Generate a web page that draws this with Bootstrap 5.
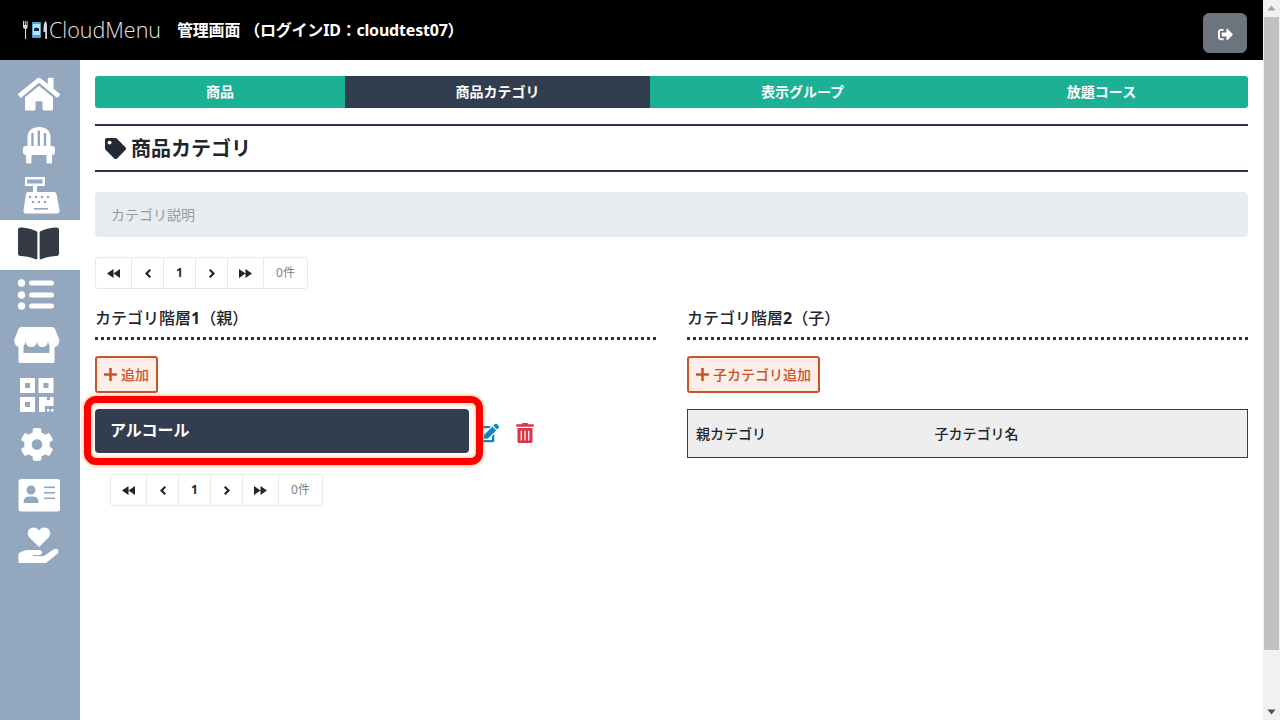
<!DOCTYPE html>
<html lang="ja">
<head>
<meta charset="utf-8">
<title>CloudMenu</title>
<link href="https://cdn.jsdelivr.net/npm/bootstrap@5.3.0/dist/css/bootstrap.min.css" rel="stylesheet">
<style>
html,body{height:720px;overflow:hidden}
body{font-family:"Noto Sans","Noto Sans CJK JP",sans-serif;color:#212529;background:#fff;font-size:14px}
.app-shell{height:720px;width:1280px}
.app-main{width:1263px}
.top-bar{height:60px;background:#000;padding:0 16px 0 23px;flex:none}
.logo-mark{width:24px;height:18px;margin-right:2px;flex:none}
.logo-word{font-family:"Open Sans","Noto Sans",sans-serif;font-weight:300;font-size:21.5px;color:#e4e4e4;width:128px;line-height:1}
.top-title{font-weight:700;font-size:16px;color:#fff;letter-spacing:-.2px}
.logout-btn{width:44px;height:40px;padding:0;background:#6c757d;border-color:#6c757d;margin-top:5px}
.logout-btn svg{width:17px;height:15px;fill:#fff}
.side-rail{width:80px;background:#93a8bf;padding-top:10px;flex:none}
.rail-item{height:50px;display:block}
.rail-item>svg{display:block;width:80px;height:50px}
.rail-on{background:#fff}
.page-body{padding:16px 15px 0;min-width:0}
.tab-strip{height:32px;background:#1cb094;border-radius:3px;overflow:hidden;flex-wrap:nowrap}
.tab-strip .nav-link{padding:0;color:#fff;font-weight:700;font-size:14px;line-height:32px;text-align:center;border-radius:0}
.tab-a{width:250px}.tab-b,.tab-c{width:305px}.tab-d{width:293px}
.tab-strip .nav-link.active{background:#333d50;color:#fff}
.head-band{margin-top:16px;height:48px;border-top:2px solid #2a3447;border-bottom:2px solid #2a3447;padding-left:10px;gap:5px}
.head-band svg{width:21px;height:21px;fill:#212b36;flex:none}
.head-band h1{font-size:20px;font-weight:700;margin:2px 0 0}
.desc-box{margin-top:20px;height:45px;background:#e9ecef;border-radius:4px;padding-left:16px;color:#969a9f;font-size:14px;line-height:45px}
.pager{margin:0;height:32px;--bs-pagination-border-radius:3px}
.pager .page-link{height:32px;padding:0;display:flex;align-items:center;justify-content:center;color:#212529;border-color:#e7e9eb;font-weight:700;background:#fff;font-size:12px}
.pager .page-link svg{fill:#212529}
.pg-w1{width:37px}.pg-w2{width:32px}.pg-w3{width:36px}.pg-w4{width:44px}
.pager .pg-w1 .page-link,.pager .pg-w2 .page-link,.pager .pg-w3 .page-link,.pager .pg-w4 .page-link{margin-left:-1px;width:calc(100% + 1px)}
.pager .pg-w1:first-child .page-link{margin-left:0;width:100%}
.pager .pg-w4 .page-link{color:#7b8085;font-weight:400}
.top-pager{margin-top:20px}
.cols{margin-top:18px;gap:31px}
.col-half{width:561px}
.sect-title{font-size:16px;font-weight:500;margin:0;height:30px;line-height:22px}
.dot-rule{border-top:3px dotted #2a3447;height:0}
.add-btn{margin-top:16px;height:37px;padding:0 7px;border:2px solid #c9532b;background:#fdeee8;color:#c9532b;font-weight:500;font-size:14px;border-radius:3px;gap:4px}
.add-btn:hover{background:#fdeee8;color:#c9532b;border-color:#c9532b}
.add-btn svg{width:13px;height:13px;fill:#c9532b}
.cat-row{margin-top:16px;gap:9px}
.cat-wrap{width:374px;height:44px;background:#333d50;border-radius:4px;color:#fff;font-weight:700;font-size:16px;padding:9px 15px;line-height:24px}
.marker-box{position:absolute;left:-11px;top:-13px;width:399px;height:69px;border:7px solid #f00;border-radius:12px;box-shadow:0 0 4px rgba(255,120,40,.7),inset 0 0 4px rgba(255,120,40,.6);pointer-events:none}
.edit-ico{width:21px;height:20px;fill:#0d86c4;margin-top:4px}
.trash-ico{width:18px;height:20px;fill:#dc3548;margin-left:8px;margin-top:4px}
.low-pager{margin:21px 0 0 15px}
.child-table{margin:16px 0 0;width:561px;height:49px;border:1px solid #333d50;--bs-table-bg:#eee;font-size:14px}
.child-table th{background:#eee;padding:0 0 0 8px;vertical-align:middle;font-weight:500;border:0;height:47px}
.child-table .c1{width:239px}
.scroll-track{width:17px;background:#f1f1f1;flex:none;height:720px}
.scroll-cap{height:17px;flex:none}
.scroll-cap svg{display:block;width:17px;height:17px}
.scroll-thumb{height:633px;margin:0 1px;background:#c1c1c1;flex:none}
</style>
</head>
<body>
<div class="app-shell d-flex">
  <div class="app-main d-flex flex-column">
    <header class="top-bar d-flex align-items-center">
      <svg class="logo-mark" viewBox="0 0 24 18">
        <path fill="#d8d8d8" d="M0 0h1v4h.8V0h1v4h.8V0h1v6q0 1.500-1.500 2V18H2V8Q0 7.500 0 6z"/>
        <rect x="9" y="1" width="9" height="16" rx="1.300" fill="#4aa8d8"/>
        <rect x="10" y="3" width="7" height="11" fill="#bfe3f5"/>
        <path fill="#222" d="M11 8h5v2h-5z M12 6.800h3l1 1.200h-5z"/>
        <path fill="#d8d8d8" d="M22.500 0q1.500 1 1.500 5v13h-1.800v-7H20.500q-.5-8 2-11z"/>
      </svg>
      <div class="logo-word">CloudMenu</div>
      <div class="top-title flex-grow-1">管理画面 （ログインID：cloudtest07）</div>
      <button class="btn btn-secondary logout-btn" type="button" aria-label="ログアウト"><svg viewBox="0 0 512 512"><path d="M497 273L329 441c-15 15-41 4.500-41-17v-96H152c-13.300 0-24-10.700-24-24v-96c0-13.300 10.700-24 24-24h136V88c0-21.400 25.900-32 41-17l168 168c9.300 9.400 9.300 24.600 0 34zM192 436v-40c0-6.600-5.400-12-12-12H96c-17.700 0-32-14.300-32-32V160c0-17.700 14.300-32 32-32h84c6.600 0 12-5.400 12-12V76c0-6.600-5.400-12-12-12H96c-53 0-96 43-96 96v192c0 53 43 96 96 96h84c6.600 0 12-5.400 12-12z"/></svg></button>
    </header>
    <div class="d-flex flex-grow-1">
      <nav class="side-rail">
        <a class="rail-item" href="#"><svg viewBox="0 0 80 50"><svg x="18" y="5.500" width="42" height="37.300" viewBox="0 0 576 512" fill="#fff"><path d="M280.370 148.260L96 300.110V464a16 16 0 0 0 16 16l112.060-.29a16 16 0 0 0 15.920-16V368a16 16 0 0 1 16-16h64a16 16 0 0 1 16 16v95.640a16 16 0 0 0 16 16.050L464 480a16 16 0 0 0 16-16V300L295.670 148.260a12.190 12.190 0 0 0-15.300 0zM571.600 251.470L488 182.560V44.050a12 12 0 0 0-12-12h-56a12 12 0 0 0-12 12v72.610L318.470 43a48 48 0 0 0-61 0L4.340 251.470a12 12 0 0 0-1.600 16.900l25.500 31A12 12 0 0 0 45.150 301l235.220-193.740a12.190 12.190 0 0 1 15.300 0L530.900 301a12 12 0 0 0 16.900-1.600l25.500-31a12 12 0 0 0-1.700-16.930z"/></svg></svg></a>
        <a class="rail-item" href="#"><svg viewBox="0 0 80 50"><path fill="#fff" d="M27.500 27V17C27.500 11 32 7 39 7s11.500 4 11.500 10v10z"/><path stroke="#93a8bf" stroke-width="2.400" fill="none" d="M32.500 27V13M38.800 27V10.500M45 27V13"/><rect x="23" y="26" width="32" height="9" rx="3" fill="#fff"/><rect x="26" y="33" width="5.500" height="10.500" rx="1" fill="#fff"/><rect x="46.500" y="33" width="5.500" height="10.500" rx="1" fill="#fff"/></svg></a>
        <a class="rail-item" href="#"><svg viewBox="0 0 80 50"><path fill="#fff" fill-rule="evenodd" d="M25 7h20v9H37v6h-4v-6h-8zM27 9.500v4h15.500v-4z"/><path fill="#fff" d="M28 22h26q2 0 2.500 2l3 16q.5 3.500-2.500 3.500H26q-3 0-2.500-3.500l2.500-16q.3-2 2-2z"/><g fill="#93a8bf"><circle cx="30" cy="27" r="1.300"/><circle cx="36" cy="27" r="1.300"/><circle cx="42" cy="27" r="1.300"/><circle cx="48" cy="27" r="1.300"/><circle cx="33" cy="32" r="1.300"/><circle cx="39" cy="32" r="1.300"/><circle cx="45" cy="32" r="1.300"/><rect x="34" y="38" width="14" height="1.600"/></g></svg></a>
        <a class="rail-item rail-on" href="#"><svg viewBox="0 0 80 50"><svg x="18" y="5" width="41" height="37" viewBox="0 0 576 512" fill="#343a46"><path d="M542.220 32.050c-54.800 3.110-163.720 14.430-230.960 55.590-4.640 2.840-7.270 7.890-7.270 13.170v363.870c0 11.550 12.630 18.850 23.280 13.490 69.180-34.820 169.230-44.320 218.700-46.920 16.890-.89 30.020-14.430 30.020-30.660V62.750c.01-17.710-15.350-31.740-33.770-30.700zM264.730 87.640C197.500 46.480 88.580 35.170 33.780 32.050 15.360 31.010 0 45.040 0 62.750V400.600c0 16.240 13.130 29.780 30.020 30.660 49.490 2.600 149.590 12.110 218.770 46.950 10.620 5.350 23.210-1.940 23.210-13.460V100.630c0-5.290-2.620-10.140-7.270-12.990z"/></svg></svg></a>
        <a class="rail-item" href="#"><svg viewBox="0 0 80 50" fill="#fff"><circle cx="21.500" cy="13" r="3.700"/><circle cx="21.500" cy="25" r="3.700"/><circle cx="21.500" cy="36" r="3.700"/><rect x="29" y="10.500" width="25" height="5" rx="2.500"/><rect x="29" y="22.500" width="25" height="5" rx="2.500"/><rect x="29" y="33.500" width="25" height="5" rx="2.500"/></svg></a>
        <a class="rail-item" href="#"><svg viewBox="0 0 80 50"><path fill="#fff" fill-rule="evenodd" d="M18.500 20h36v21.500q0 1.500-1.500 1.500H20q-1.500 0-1.500-1.500zM23.500 22v11h26V22z"/><path fill="#fff" d="M21 7h31q2 0 3 2l4 10q1 2.500-.5 2.500H15q-1.500 0 -.5-2.500l4-10q1-2 2.500-2z"/><g fill="#fff"><circle cx="20" cy="21.500" r="5.500"/><circle cx="31.200" cy="21.500" r="5.500"/><circle cx="42.400" cy="21.500" r="5.500"/><circle cx="53.600" cy="21.500" r="5.500"/></g></svg></a>
        <a class="rail-item" href="#"><svg viewBox="0 0 80 50"><g fill="#fff"><rect x="20" y="8" width="15" height="15"/><rect x="38.500" y="8" width="15" height="15"/><rect x="20" y="27" width="15" height="15"/><path d="M39 27h8v3h3v-3h3.500v9h-8.500v6h-6z"/><rect x="47" y="39" width="2.500" height="2.500"/><rect x="51" y="39" width="2.500" height="2.500"/></g><g fill="#93a8bf"><rect x="25" y="13" width="5" height="5"/><rect x="43.500" y="13" width="5" height="5"/><rect x="25" y="32" width="5" height="5"/></g></svg></a>
        <a class="rail-item" href="#"><svg viewBox="0 0 80 50"><svg x="20" y="7.500" width="34" height="34" viewBox="0 0 512 512" fill="#fff"><path d="M487.400 315.700l-42.600-24.600c4.300-23.200 4.300-47 0-70.200l42.600-24.600c4.900-2.800 7.100-8.600 5.500-14-11.100-35.600-30-67.800-54.700-94.600-3.800-4.100-10-5.100-14.800-2.300L380.800 110c-17.900-15.400-38.500-27.300-60.800-35.100V25.800c0-5.600-3.900-10.500-9.400-11.700-36.700-8.200-74.300-7.800-109.200 0-5.500 1.200-9.400 6.100-9.400 11.700V75c-22.200 7.900-42.800 19.800-60.800 35.100L88.700 85.500c-4.900-2.800-11-1.900-14.800 2.300-24.700 26.700-43.600 58.900-54.700 94.600-1.700 5.400.6 11.200 5.500 14L67.300 221c-4.300 23.200-4.300 47 0 70.200l-42.600 24.600c-4.900 2.800-7.100 8.600-5.500 14 11.100 35.600 30 67.800 54.700 94.600 3.800 4.100 10 5.100 14.800 2.300l42.600-24.600c17.900 15.400 38.500 27.300 60.800 35.100v49.200c0 5.600 3.900 10.500 9.400 11.700 36.700 8.200 74.300 7.800 109.200 0 5.500-1.200 9.400-6.100 9.400-11.700v-49.200c22.200-7.900 42.800-19.800 60.800-35.100l42.600 24.600c4.900 2.800 11 1.900 14.800-2.300 24.700-26.700 43.600-58.900 54.700-94.600 1.500-5.500-.7-11.300-5.600-14.100zM256 336c-44.100 0-80-35.900-80-80s35.900-80 80-80 80 35.900 80 80-35.900 80-80 80z"/></svg></svg></a>
        <a class="rail-item" href="#"><svg viewBox="0 0 80 50"><rect x="18.500" y="9" width="41.500" height="32.500" rx="2.500" fill="#fff"/><g fill="#93a8bf"><circle cx="31" cy="20" r="4.500"/><path d="M23.500 33q0-6.500 5-6.500h5q5 0 5 6.500z"/><rect x="44" y="16.500" width="11" height="1.600"/><rect x="44" y="22" width="11" height="1.600"/><rect x="44" y="27.500" width="11" height="1.600"/></g></svg></a>
        <a class="rail-item" href="#"><svg viewBox="0 0 80 50" fill="#fff"><path d="M39 27 L29.500 17.500C26 14 28 7.500 33.500 7.500Q37 7.500 39 10.500Q41 7.500 44.500 7.500C50 7.500 52 14 48.500 17.500z"/><path d="M18.500 36V33.500Q24 29.500 29 30h10q3 0 3 2.500t-3 2.500h-6v1h11l9.500-6.500q2.500-1.500 4.500.5 1.500 2-.5 3.800L46 43H18.500z"/></svg></a>
      </nav>
      <main class="page-body flex-grow-1">
        <ul class="nav tab-strip">
          <li class="nav-item tab-a"><a class="nav-link" href="#">商品</a></li>
          <li class="nav-item tab-b"><a class="nav-link active" href="#">商品カテゴリ</a></li>
          <li class="nav-item tab-c"><a class="nav-link" href="#">表示グループ</a></li>
          <li class="nav-item tab-d"><a class="nav-link" href="#">放題コース</a></li>
        </ul>
        <div class="head-band d-flex align-items-center">
          <svg viewBox="0 0 512 512"><path d="M0 252.118V48C0 21.490 21.490 0 48 0h204.118a48 48 0 0 1 33.941 14.059l211.882 211.882c18.745 18.745 18.745 49.137 0 67.882L293.823 497.941c-18.745 18.745-49.137 18.745-67.882 0L14.059 286.059A48 48 0 0 1 0 252.118zM112 64c-26.510 0-48 21.490-48 48s21.490 48 48 48 48-21.490 48-48-21.490-48-48-48z"/></svg>
          <h1>商品カテゴリ</h1>
        </div>
        <div class="desc-box">カテゴリ説明</div>
        <ul class="pagination pager top-pager">
          <li class="page-item pg-w1"><a class="page-link" href="#"><svg width="13" height="9" viewBox="0 0 13 9"><path d="M6.500 0v9L0 4.500zM13 0v9L6.500 4.500z"/></svg></a></li>
          <li class="page-item pg-w2"><a class="page-link" href="#"><svg width="6" height="9" viewBox="0 0 6 9"><path d="M4.500 0L6 1.500 3 4.500l3 3L4.500 9 0 4.500z"/></svg></a></li>
          <li class="page-item pg-w2"><a class="page-link" href="#">1</a></li>
          <li class="page-item pg-w2"><a class="page-link" href="#"><svg width="6" height="9" viewBox="0 0 6 9"><path d="M1.500 0L0 1.500 3 4.500l-3 3L1.500 9 6 4.500z"/></svg></a></li>
          <li class="page-item pg-w3"><a class="page-link" href="#"><svg width="13" height="9" viewBox="0 0 13 9"><path d="M0 0v9l6.500-4.500zM6.500 0v9L13 4.500z"/></svg></a></li>
          <li class="page-item pg-w4"><a class="page-link" href="#">0件</a></li>
        </ul>
        <div class="cols d-flex">
          <section class="col-half">
            <h2 class="sect-title">カテゴリ階層<b>1</b>（親）</h2>
            <div class="dot-rule"></div>
            <button class="btn add-btn d-inline-flex align-items-center" type="button"><svg viewBox="0 0 12 12"><path d="M4.800 0h2.400v4.800H12v2.400H7.200V12H4.800V7.200H0V4.800h4.800z"/></svg>追加</button>
            <div class="cat-row d-flex align-items-center">
              <div class="cat-wrap position-relative">アルコール<span class="marker-box"></span></div>
              <svg class="edit-ico" viewBox="0 0 576 512"><path d="M402.600 83.200l90.200 90.200c3.800 3.800 3.800 10 0 13.800L274.400 405.600l-92.800 10.300c-12.400 1.400-22.900-9.100-21.500-21.500l10.300-92.800L388.800 83.200c3.800-3.800 10-3.800 13.800 0zm162-22.900l-48.800-48.800c-15.200-15.200-39.900-15.200-55.200 0l-35.400 35.400c-3.800 3.800-3.800 10 0 13.800l90.200 90.200c3.800 3.800 10 3.800 13.800 0l35.400-35.400c15.200-15.300 15.200-40 0-55.200zM384 346.200V448H64V128h229.800c3.200 0 6.200-1.300 8.500-3.500l40-40c7.600-7.600 2.200-20.500-8.500-20.500H48C21.500 64 0 85.500 0 112v352c0 26.500 21.500 48 48 48h352c26.500 0 48-21.500 48-48V306.200c0-10.700-12.900-16-20.500-8.500l-40 40c-2.200 2.300-3.500 5.300-3.500 8.500z"/></svg>
              <svg class="trash-ico" viewBox="0 0 448 512"><path d="M32 464a48 48 0 0 0 48 48h288a48 48 0 0 0 48-48V128H32zm272-256a16 16 0 0 1 32 0v224a16 16 0 0 1-32 0zm-96 0a16 16 0 0 1 32 0v224a16 16 0 0 1-32 0zm-96 0a16 16 0 0 1 32 0v224a16 16 0 0 1-32 0zM432 32H312l-9.400-18.700A24 24 0 0 0 281.100 0H166.800a23.720 23.720 0 0 0-21.400 13.300L136 32H16A16 16 0 0 0 0 48v32a16 16 0 0 0 16 16h416a16 16 0 0 0 16-16V48a16 16 0 0 0-16-16z"/></svg>
            </div>
            <ul class="pagination pager low-pager">
              <li class="page-item pg-w1"><a class="page-link" href="#"><svg width="13" height="9" viewBox="0 0 13 9"><path d="M6.500 0v9L0 4.500zM13 0v9L6.500 4.500z"/></svg></a></li>
              <li class="page-item pg-w2"><a class="page-link" href="#"><svg width="6" height="9" viewBox="0 0 6 9"><path d="M4.500 0L6 1.500 3 4.500l3 3L4.500 9 0 4.500z"/></svg></a></li>
              <li class="page-item pg-w2"><a class="page-link" href="#">1</a></li>
              <li class="page-item pg-w2"><a class="page-link" href="#"><svg width="6" height="9" viewBox="0 0 6 9"><path d="M1.500 0L0 1.500 3 4.500l-3 3L1.500 9 6 4.500z"/></svg></a></li>
              <li class="page-item pg-w3"><a class="page-link" href="#"><svg width="13" height="9" viewBox="0 0 13 9"><path d="M0 0v9l6.500-4.500zM6.500 0v9L13 4.500z"/></svg></a></li>
              <li class="page-item pg-w4"><a class="page-link" href="#">0件</a></li>
            </ul>
          </section>
          <section class="col-half">
            <h2 class="sect-title">カテゴリ階層<b>2</b>（子）</h2>
            <div class="dot-rule"></div>
            <button class="btn add-btn d-inline-flex align-items-center" type="button"><svg viewBox="0 0 12 12"><path d="M4.800 0h2.400v4.800H12v2.400H7.200V12H4.800V7.200H0V4.800h4.800z"/></svg>子カテゴリ追加</button>
            <table class="table child-table">
              <thead><tr><th class="c1">親カテゴリ</th><th>子カテゴリ名</th></tr></thead>
            </table>
          </section>
        </div>
      </main>
    </div>
  </div>
  <div class="scroll-track d-flex flex-column">
    <div class="scroll-cap"><svg viewBox="0 0 17 17"><path fill="#a3a3a3" d="M8.500 5.500L12.500 10.500H4.500z"/></svg></div>
    <div class="scroll-thumb"></div>
    <div class="flex-grow-1"></div>
    <div class="scroll-cap"><svg viewBox="0 0 17 17"><path fill="#505050" d="M4.500 6.500H12.500L8.500 11.500z"/></svg></div>
  </div>
</div>
<script src="https://cdn.jsdelivr.net/npm/bootstrap@5.3.0/dist/js/bootstrap.bundle.min.js"></script>
</body>
</html>
